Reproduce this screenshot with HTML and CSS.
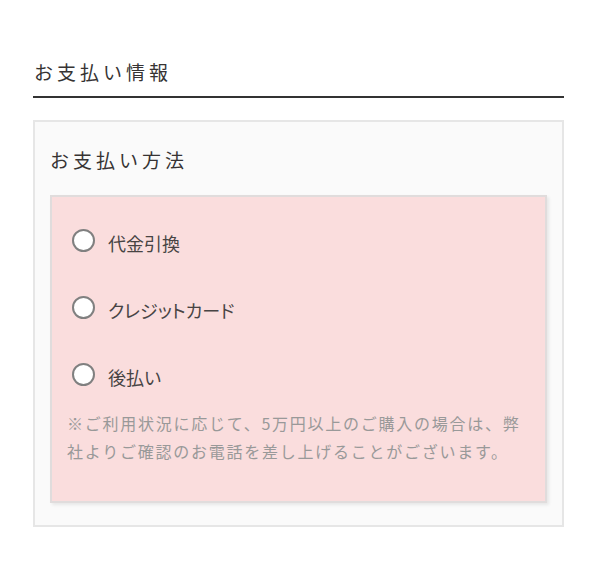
FILE: index.html
```html
<!DOCTYPE html>
<html lang="ja">
<head>
<meta charset="utf-8">
<title>お支払い情報</title>
<link rel="stylesheet" href="styles.css">
</head>
<body>
<div class="page">
  <h2 class="section-title">お支払い情報</h2>
  <div class="panel">
    <h3 class="panel-title">お支払い方法</h3>
    <div class="options">
      <ul class="radio-list">
        <li class="radio-row"><span class="radio"></span><span class="radio-label">代金引換</span></li>
        <li class="radio-row"><span class="radio"></span><span class="radio-label">クレジットカード</span></li>
        <li class="radio-row"><span class="radio"></span><span class="radio-label">後払い</span></li>
      </ul>
      <p class="note">※ご利用状況に応じて、5万円以上のご購入の場合は、弊社よりご確認のお電話を差し上げることがございます。</p>
    </div>
  </div>
</div>
</body>
</html>
```

FILE: styles.css
```css
html, body {
  margin: 0;
  padding: 0;
  background: #ffffff;
}
body {
  font-family: "Noto Sans CJK JP", "Noto Sans", sans-serif;
  color: #363333;
}
.page {
  width: 531px;
  padding: 58px 0 0 33px;
}
.section-title {
  margin: 0;
  font-size: 19px;
  font-weight: normal;
  line-height: 27px;
  letter-spacing: 4px;
  padding: 0 0 11px 1px;
  border-bottom: 2px solid #333333;
}
.panel {
  margin-top: 22px;
  border: 2px solid #e6e6e6;
  background: #fafafa;
  padding: 0 15px 22px;
}
.panel-title {
  margin: 24px 0 22px;
  font-size: 19px;
  font-weight: normal;
  line-height: 27px;
  letter-spacing: 4px;
}
.options {
  background: #fadddd;
  border: 2px solid #e0dcdc;
  box-shadow: 2px 2px 3px rgba(0, 0, 0, 0.08);
  padding: 32px 15px 36px;
}
.radio-list {
  list-style: none;
  margin: 0 0 0 5px;
  padding: 0;
}
.radio-row {
  display: flex;
  align-items: center;
  gap: 13px;
  height: 22px;
  margin-bottom: 45px;
}
.radio-row:last-child {
  margin-bottom: 24px;
}
.radio {
  box-sizing: border-box;
  width: 23px;
  height: 23px;
  border: 2px solid #808080;
  border-radius: 50%;
  background: #ffffff;
  flex: none;
}
.radio-label {
  font-size: 18px;
  line-height: 22px;
  font-feature-settings: "palt";
  color: #474444;
  position: relative;
  top: 3px;
}
.note {
  margin: 0;
  font-size: 16px;
  line-height: 28px;
  letter-spacing: 1.75px;
  color: #999999;
}
```
